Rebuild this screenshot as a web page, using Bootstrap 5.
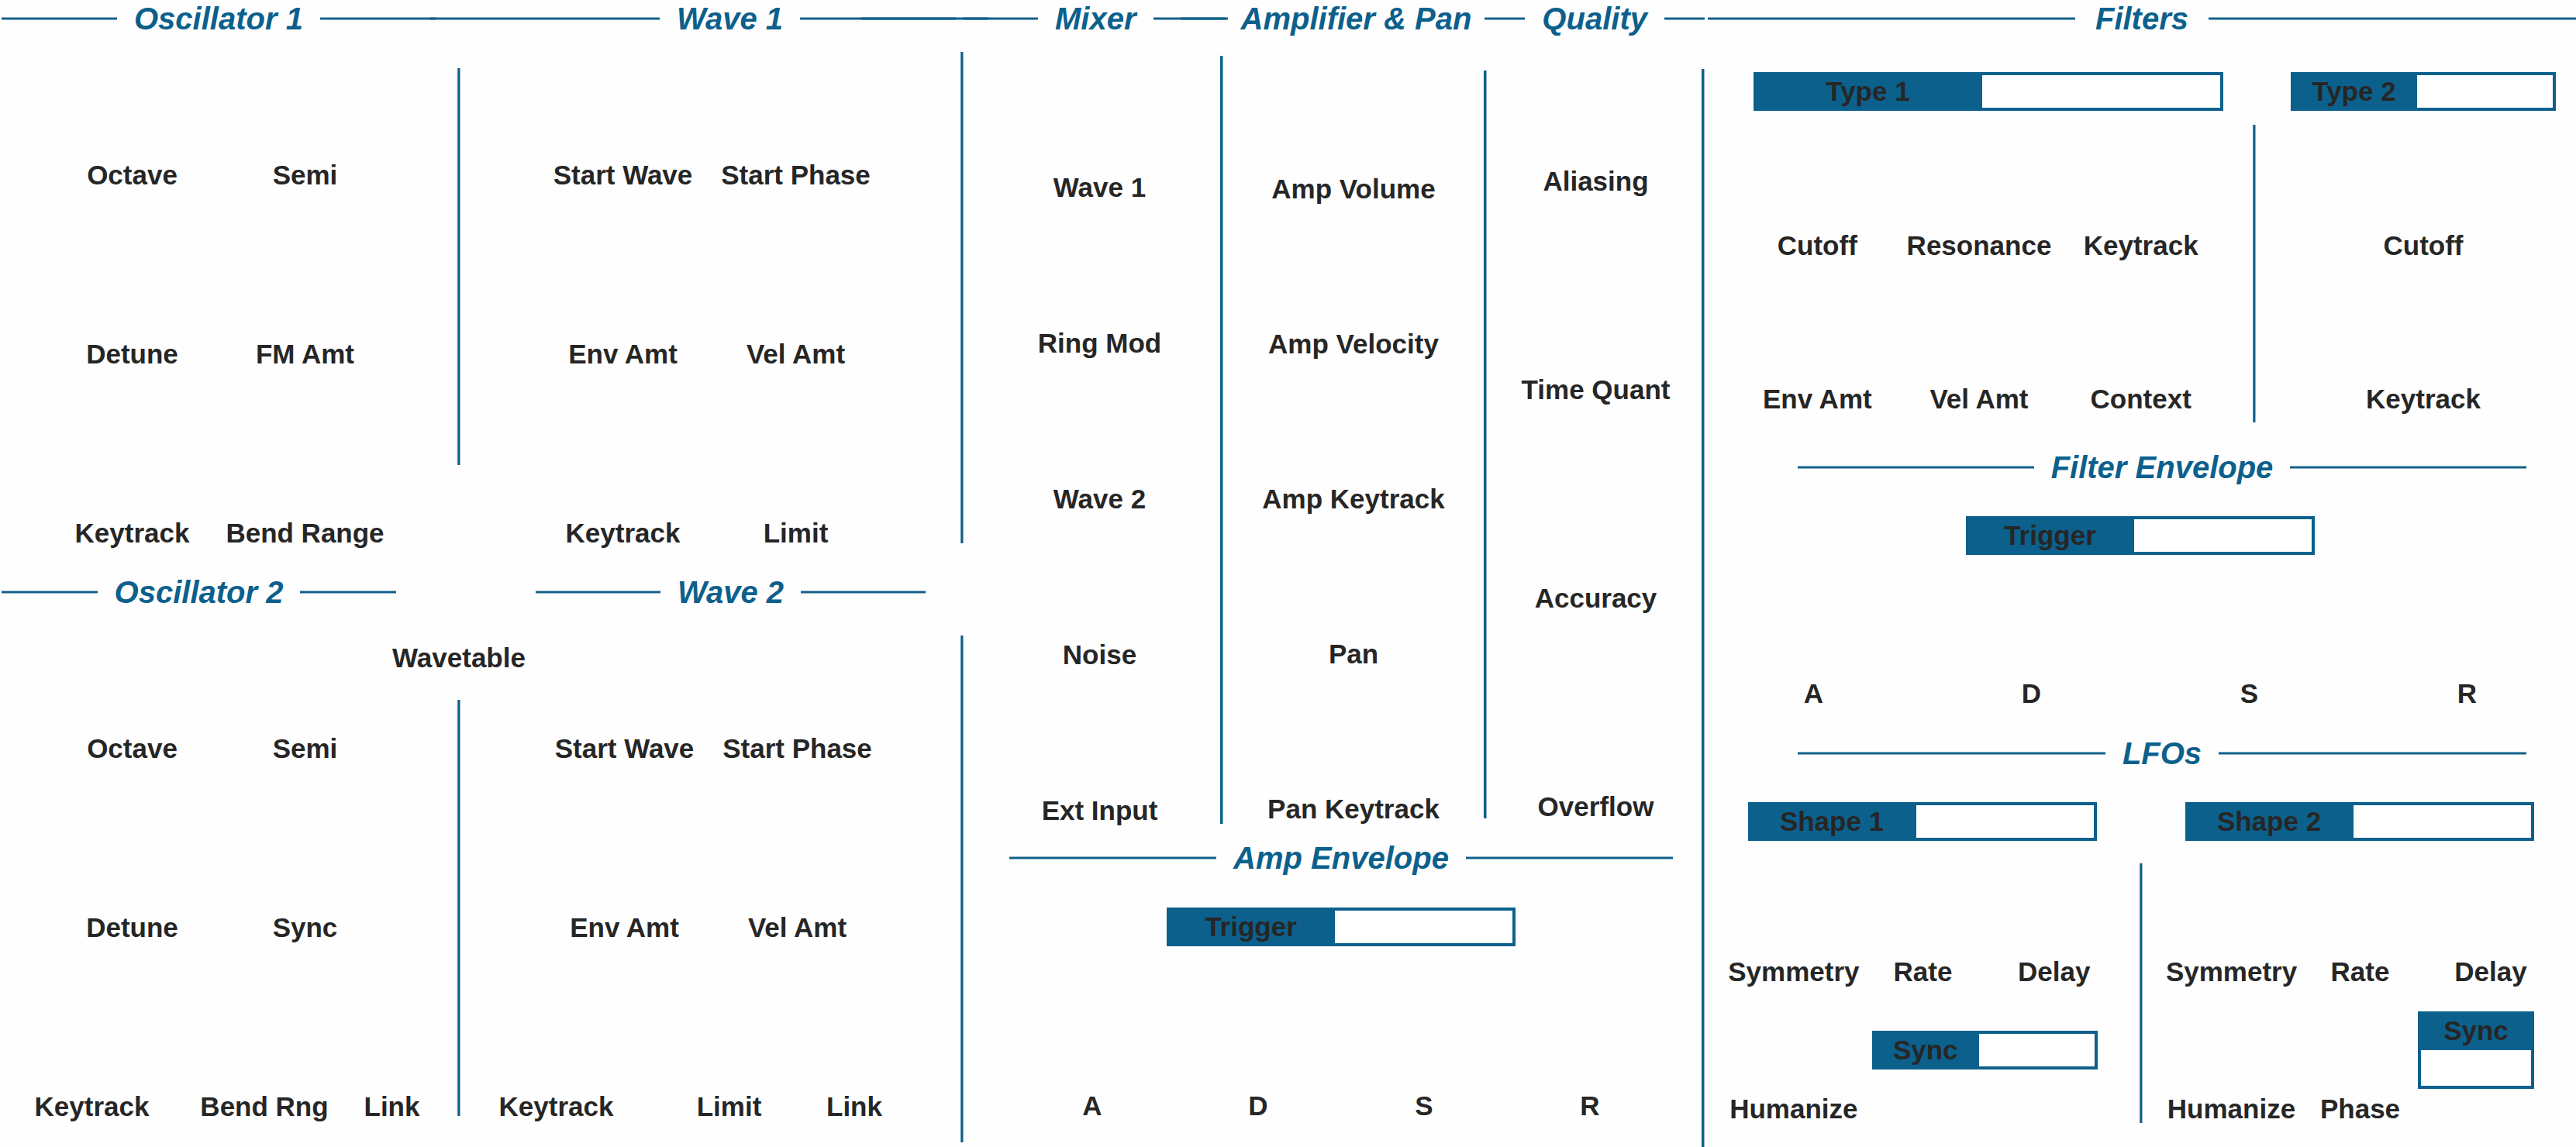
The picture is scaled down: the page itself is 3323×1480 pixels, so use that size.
<!DOCTYPE html>
<html lang="en">
<head>
<meta charset="utf-8">
<meta name="viewport" content="width=device-width, initial-scale=1">
<title>Synth panel</title>
<link href="https://cdn.jsdelivr.net/npm/bootstrap@5.3.0/dist/css/bootstrap.min.css" rel="stylesheet">
<style>
:root{--ink:#262626;--blue:#0c608c;--soft:#8fb0c2;--half:#4a86a6}
body{font-family:"Liberation Sans",Arial,sans-serif;background:#fefefe;color:var(--ink);font-weight:700;font-size:35px;line-height:40px;overflow-x:hidden}
h2{margin:0 22px;font-size:40px;line-height:48px;font-weight:700;font-style:italic;color:var(--blue);white-space:nowrap}
/* rules */
.rule-x{height:4px;min-width:0;flex:1 1 0;background:linear-gradient(var(--soft) 1px,var(--blue) 1px 3px,var(--soft) 3px)}
.rule-x.dense{background:linear-gradient(var(--half) 1px,var(--blue) 1px 3px,var(--half) 3px)}
.rule-y{width:4px;background:linear-gradient(90deg,var(--half) 1px,var(--blue) 1px 3px,var(--soft) 3px)}
.rule-y.firm{background:linear-gradient(90deg,var(--blue) 3px,var(--soft) 3px)}
.g3px{flex-grow:3}.g7{flex-grow:7}.g9{flex-grow:9}.g33{flex-grow:33}.g35{flex-grow:35}.g52{flex-grow:52}.g58{flex-grow:58}.g64{flex-grow:64}.g79{flex-grow:79}.g122{flex-grow:122}.g142{flex-grow:142}.g149{flex-grow:149}.g289{flex-grow:289}.g474{flex-grow:474}
.titlebar{padding-left:2px}
.titlebar h2.snug{margin:0 17px}
.titlebar h2.wide{margin:0 26px}
/* knob captions */
.cap{display:flex;justify-content:center;align-items:flex-end;white-space:nowrap;min-width:0}
.panel{display:grid}
.main-cols{grid-template-columns:1239fr 4px 952fr 4px 1124fr}
.osc-cols{grid-template-columns:590fr 4px 645fr}
.osc-rows{grid-template-rows:198px 231px 231px}
.osc-rows.under{grid-template-rows:117px 231px 231px}
.osc-pad{grid-template-columns:59fr 223fr 223fr 85fr}
.wave-pad{grid-template-columns:98fr 223fr 223fr 101fr}
.wave-pad.under{grid-template-columns:100fr 223fr 223fr 99fr}
.osc-pad>:nth-child(2n+1),.wave-pad>:nth-child(2n+1){grid-column:2}
.osc-link{display:grid;grid-template-columns:7fr 223fr 222fr 107fr 31fr}
.wave-link{display:grid;grid-template-columns:12fr 223fr 223fr 100fr 87fr}
.osc-link>:first-child,.wave-link>:first-child{grid-column:2}
.osc-pad>.osc-link,.wave-pad>.wave-link{grid-column:1/-1}
.osc-titles{grid-template-columns:509fr 180fr 503fr;margin:0 45px 0 2px;padding-top:32px}
.osc-div{margin:40px 0 108px}
.osc-div.low{margin:34px 0 8px}
.main-div{padding:19px 0 6px}
.main-div .up{flex:634 0 0}.main-div .hole{flex:119 0 0}.main-div .down{flex:654 0 0}
.mix-cols{grid-template-columns:331fr 4px 336fr 4px 277fr}
.mix-rows{grid-template-rows:214px repeat(4,201px);padding-left:20px}
.amp-rows{grid-template-rows:216px repeat(4,200px)}
.qual-rows{grid-template-rows:206px repeat(3,269px);padding-left:4px}
.mix-div{margin:24px 0 3px}
.amp-div{margin:43px 0 10px}
.amp-env{margin:17px 37px 0 59px}
.amp-env .field{margin-top:40px}
.amp-env .four{margin-top:186px}
.four{grid-template-columns:repeat(4,1fr)}
.side-div{margin-top:41px}
.filter-types{grid-template-columns:606fr 342fr;column-gap:87px;margin:45px 26px 0 63px}
.filter-cols{grid-template-columns:707fr 4px 413fr;margin-bottom:44px}
.filter1{grid-template:194px 198px/repeat(3,1fr);margin:0 40px 0 41px}
.filter2{grid-template-rows:194px 198px;margin:0 26px 0 45px}
.filter-div{margin:18px 0 -10px}
.inner-title{margin:0 64px 39px 120px}
.filter-env{margin:159px 0 33px}
.lfo-cols{grid-template-columns:561fr 4px 559fr}
.lfo-caps{grid-template-columns:166fr 168fr 171fr;margin:149px 25px 0 32px}
.lfo-sync{margin:56px 54px 31px 0}
.lfo-sync.high{margin:31px 54px 6px 0}
.lfo-foot{grid-template-columns:166fr 168fr 171fr;margin:0 25px 0 32px}
.lfo-div{margin:79px 0 2px}
/* labelled fields */
.field{display:flex;height:50px;min-width:0}
.field label{flex:0 0 calc(50% - 8px);background:var(--blue);text-align:center;padding:5px 0;white-space:nowrap}
.field input{flex:1 1 0;min-width:0;border:4px solid var(--blue);border-left:0;border-radius:0;background:#fff;padding:0 8px;font:inherit}
.field.tall{flex-direction:column;height:100px}
.field.tall label{flex:0 0 50px}
.field.tall input{border:4px solid var(--blue);border-top:0}
.w450{width:450px}.w291{width:291px}.w150{width:150px}
</style>
</head>
<body>
<header class="titlebar d-flex align-items-center">
  <span class="rule-x g149"></span>
  <h2>Oscillator 1</h2>
  <span class="rule-x g142"></span><span class="rule-x dense g7"></span><span class="rule-x g289"></span>
  <h2>Wave 1</h2>
  <span class="rule-x g79"></span><span class="rule-x dense g122"></span><span class="rule-x g9"></span><span class="rule-x dense g33"></span><span class="rule-x g64"></span>
  <h2>Mixer</h2>
  <span class="rule-x g35"></span><span class="rule-x dense g58"></span><span class="rule-x g3px"></span>
  <h2 class="snug">Amplifier &amp; Pan</h2>
  <span class="rule-x g52"></span>
  <h2>Quality</h2>
  <span class="rule-x g52"></span><span class="rule-x g474 ms-1"></span>
  <h2 class="wide">Filters</h2>
  <span class="rule-x g474"></span>
</header>
<main class="panel main-cols">
  <section class="left-side">
    <div class="panel osc-cols">
      <div class="panel osc-rows osc-pad">
        <span class="cap">Octave</span><span class="cap">Semi</span>
        <span class="cap">Detune</span><span class="cap">FM Amt</span>
        <span class="cap">Keytrack</span><span class="cap">Bend Range</span>
      </div>
      <div class="rule-y osc-div"></div>
      <div class="panel osc-rows wave-pad">
        <span class="cap">Start Wave</span><span class="cap">Start Phase</span>
        <span class="cap">Env Amt</span><span class="cap">Vel Amt</span>
        <span class="cap">Keytrack</span><span class="cap">Limit</span>
      </div>
    </div>
    <div class="panel osc-titles">
      <div class="d-flex align-items-center"><span class="rule-x"></span><h2>Oscillator 2</h2><span class="rule-x"></span></div>
      <div></div>
      <div class="d-flex align-items-center"><span class="rule-x"></span><h2>Wave 2</h2><span class="rule-x"></span></div>
    </div>
    <div class="panel osc-cols" style="padding-top:41px"><span></span><span class="cap">Wavetable</span><span></span></div>
    <div class="panel osc-cols" style="padding-bottom:32px">
      <div class="panel osc-rows under osc-pad">
        <span class="cap">Octave</span><span class="cap">Semi</span>
        <span class="cap">Detune</span><span class="cap">Sync</span>
        <div class="osc-link"><span class="cap">Keytrack</span><span class="cap">Bend Rng</span><span class="cap">Link</span></div>
      </div>
      <div class="rule-y osc-div low"></div>
      <div class="panel osc-rows under wave-pad">
        <span class="cap">Start Wave</span><span class="cap">Start Phase</span>
        <span class="cap">Env Amt</span><span class="cap">Vel Amt</span>
        <div class="wave-link"><span class="cap">Keytrack</span><span class="cap">Limit</span><span class="cap">Link</span></div>
      </div>
    </div>
  </section>
  <div class="main-div d-flex flex-column"><span class="rule-y up"></span><span class="hole"></span><span class="rule-y down"></span></div>
  <section>
    <div class="panel mix-cols">
      <div class="panel mix-rows"><span class="cap">Wave 1</span><span class="cap">Ring Mod</span><span class="cap">Wave 2</span><span class="cap">Noise</span><span class="cap">Ext Input</span></div>
      <div class="rule-y firm mix-div"></div>
      <div class="panel amp-rows"><span class="cap">Amp Volume</span><span class="cap">Amp Velocity</span><span class="cap">Amp Keytrack</span><span class="cap">Pan</span><span class="cap">Pan Keytrack</span></div>
      <div class="rule-y firm amp-div"></div>
      <div class="panel qual-rows"><span class="cap">Aliasing</span><span class="cap">Time Quant</span><span class="cap">Accuracy</span><span class="cap">Overflow</span></div>
    </div>
    <div class="amp-env">
      <div class="d-flex align-items-center"><span class="rule-x"></span><h2>Amp Envelope</h2><span class="rule-x"></span></div>
      <div class="field w450 mx-auto"><label for="ampTrig">Trigger</label><input id="ampTrig" type="text"></div>
      <div class="panel four"><span class="cap">A</span><span class="cap">D</span><span class="cap">S</span><span class="cap">R</span></div>
    </div>
  </section>
  <div class="rule-y firm side-div"></div>
  <section>
    <div class="panel filter-types">
      <div class="field"><label for="type1">Type 1</label><input id="type1" type="text"></div>
      <div class="field"><label for="type2">Type 2</label><input id="type2" type="text"></div>
    </div>
    <div class="panel filter-cols">
      <div class="panel filter1"><span class="cap">Cutoff</span><span class="cap">Resonance</span><span class="cap">Keytrack</span><span class="cap">Env Amt</span><span class="cap">Vel Amt</span><span class="cap">Context</span></div>
      <div class="rule-y filter-div"></div>
      <div class="panel filter2"><span class="cap">Cutoff</span><span class="cap">Keytrack</span></div>
    </div>
    <div class="inner-title d-flex align-items-center"><span class="rule-x"></span><h2>Filter Envelope</h2><span class="rule-x"></span></div>
    <div class="field w450 mx-auto"><label for="filTrig">Trigger</label><input id="filTrig" type="text"></div>
    <div class="panel four filter-env"><span class="cap">A</span><span class="cap">D</span><span class="cap">S</span><span class="cap">R</span></div>
    <div class="inner-title d-flex align-items-center"><span class="rule-x"></span><h2>LFOs</h2><span class="rule-x"></span></div>
    <div class="panel lfo-cols">
      <div>
        <div class="field w450 mx-auto"><label for="shape1">Shape 1</label><input id="shape1" type="text"></div>
        <div class="panel lfo-caps"><span class="cap">Symmetry</span><span class="cap">Rate</span><span class="cap">Delay</span></div>
        <div class="lfo-sync d-flex justify-content-end"><div class="field w291"><label for="sync1">Sync</label><input id="sync1" type="text"></div></div>
        <div class="panel lfo-foot"><span class="cap">Humanize</span></div>
      </div>
      <div class="rule-y lfo-div"></div>
      <div>
        <div class="field w450 mx-auto"><label for="shape2">Shape 2</label><input id="shape2" type="text"></div>
        <div class="panel lfo-caps"><span class="cap">Symmetry</span><span class="cap">Rate</span><span class="cap">Delay</span></div>
        <div class="lfo-sync high d-flex justify-content-end"><div class="field tall w150"><label for="sync2">Sync</label><input id="sync2" type="text"></div></div>
        <div class="panel lfo-foot"><span class="cap">Humanize</span><span class="cap">Phase</span></div>
      </div>
    </div>
  </section>
</main>
<script src="https://cdn.jsdelivr.net/npm/bootstrap@5.3.0/dist/js/bootstrap.bundle.min.js"></script>
</body>
</html>
